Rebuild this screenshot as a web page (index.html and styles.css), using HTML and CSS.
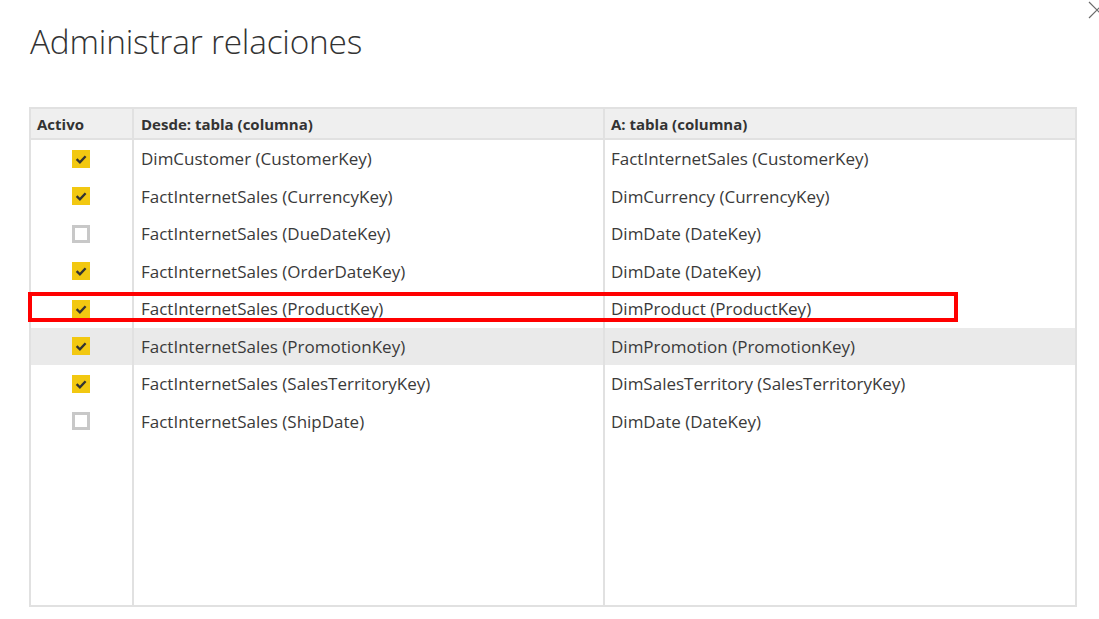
FILE: index.html
```html
<!DOCTYPE html>
<html lang="es">
<head>
<meta charset="utf-8">
<title>Administrar relaciones</title>
<link rel="stylesheet" href="styles.css">
</head>
<body>
<div class="dialog">
  <svg class="close" width="18" height="18" viewBox="0 0 18 18"><path d="M1 1 L17 17 M17 1 L1 17" stroke="#6b6b6b" stroke-width="1.2" fill="none"/></svg>
  <h1 class="title">Administrar relaciones</h1>
  <div class="table">
    <div class="row head">
      <div class="cell c1">Activo</div>
      <div class="cell c2">Desde: tabla (columna)</div>
      <div class="cell c3">A: tabla (columna)</div>
    </div>
    <div class="row">
      <div class="cell c1"><span class="cb on"><svg viewBox="0 0 18 18"><path d="M4.6 9.2 L7.9 12.4 L13.6 6.2" /></svg></span></div>
      <div class="cell c2">DimCustomer (CustomerKey)</div>
      <div class="cell c3">FactInternetSales (CustomerKey)</div>
    </div>
    <div class="row">
      <div class="cell c1"><span class="cb on"><svg viewBox="0 0 18 18"><path d="M4.6 9.2 L7.9 12.4 L13.6 6.2" /></svg></span></div>
      <div class="cell c2">FactInternetSales (CurrencyKey)</div>
      <div class="cell c3">DimCurrency (CurrencyKey)</div>
    </div>
    <div class="row">
      <div class="cell c1"><span class="cb off"></span></div>
      <div class="cell c2">FactInternetSales (DueDateKey)</div>
      <div class="cell c3">DimDate (DateKey)</div>
    </div>
    <div class="row">
      <div class="cell c1"><span class="cb on"><svg viewBox="0 0 18 18"><path d="M4.6 9.2 L7.9 12.4 L13.6 6.2" /></svg></span></div>
      <div class="cell c2">FactInternetSales (OrderDateKey)</div>
      <div class="cell c3">DimDate (DateKey)</div>
    </div>
    <div class="row">
      <div class="cell c1"><span class="cb on"><svg viewBox="0 0 18 18"><path d="M4.6 9.2 L7.9 12.4 L13.6 6.2" /></svg></span></div>
      <div class="cell c2">FactInternetSales (ProductKey)</div>
      <div class="cell c3">DimProduct (ProductKey)</div>
    </div>
    <div class="row hover">
      <div class="cell c1"><span class="cb on"><svg viewBox="0 0 18 18"><path d="M4.6 9.2 L7.9 12.4 L13.6 6.2" /></svg></span></div>
      <div class="cell c2">FactInternetSales (PromotionKey)</div>
      <div class="cell c3">DimPromotion (PromotionKey)</div>
    </div>
    <div class="row">
      <div class="cell c1"><span class="cb on"><svg viewBox="0 0 18 18"><path d="M4.6 9.2 L7.9 12.4 L13.6 6.2" /></svg></span></div>
      <div class="cell c2">FactInternetSales (SalesTerritoryKey)</div>
      <div class="cell c3">DimSalesTerritory (SalesTerritoryKey)</div>
    </div>
    <div class="row">
      <div class="cell c1"><span class="cb off"></span></div>
      <div class="cell c2">FactInternetSales (ShipDate)</div>
      <div class="cell c3">DimDate (DateKey)</div>
    </div>
    <div class="row filler">
      <div class="cell c1"></div>
      <div class="cell c2"></div>
      <div class="cell c3"></div>
    </div>
  </div>
  <div class="highlight"></div>
</div>
</body>
</html>
```

FILE: styles.css
```css
html, body {
  margin: 0;
  padding: 0;
  background: #ffffff;
}
body {
  width: 1099px;
  height: 619px;
  overflow: hidden;
  font-family: "Open Sans", "Noto Sans", "Liberation Sans", sans-serif;
  color: #333333;
}
.dialog {
  position: relative;
  width: 1099px;
  height: 619px;
  padding: 18px 0 0 29px;
  box-sizing: border-box;
}
.close {
  position: absolute;
  left: 1088px;
  top: 1px;
}
.title {
  margin: 0 0 0 1px;
  font-weight: 300;
  font-size: 33.4px;
  line-height: 46px;
  color: #333333;
  letter-spacing: -0.2px;
}
.table {
  margin-top: 43px;
  width: 1048px;
  height: 500px;
  box-sizing: border-box;
  border: 2px solid #e1e1e1;
  display: flex;
  flex-direction: column;
}
.row {
  display: grid;
  grid-template-columns: 101px 471px 1fr;
  height: 37.5px;
  flex: none;
}
.row.head {
  height: 31px;
  background: #efefef;
  border-bottom: 2px solid #e1e1e1;
  box-sizing: border-box;
  font-weight: 700;
}
.row.hover {
  background: #eaeaea;
}
.row.filler {
  flex: 1;
  height: auto;
}
.cell {
  display: flex;
  align-items: center;
  font-size: 17px;
  white-space: nowrap;
  overflow: hidden;
  color: #3a3a3a;
}
.head .cell {
  font-size: 15px;
  padding-top: 1px;
  color: #333333;
}
.c1 {
  justify-content: center;
}
.head .c1 {
  justify-content: flex-start;
  padding-left: 6px;
}
.c2, .c3 {
  border-left: 2px solid #e1e1e1;
  padding-left: 7px;
}
.c3 {
  padding-left: 6px;
}
.cb {
  width: 18px;
  height: 18px;
  box-sizing: border-box;
  display: block;
  margin-left: -2px;
}
.cb.on {
  background: #f2c811;
}
.cb.on svg {
  width: 18px;
  height: 18px;
  display: block;
}
.cb.on path {
  fill: none;
  stroke: #333333;
  stroke-width: 2.3;
}
.cb.off {
  border: 3px solid #c8c8c8;
  background: #ffffff;
}
.highlight {
  position: absolute;
  left: 28px;
  top: 292px;
  width: 930px;
  height: 30px;
  box-sizing: border-box;
  border: 4px solid #ff0000;
}
```
